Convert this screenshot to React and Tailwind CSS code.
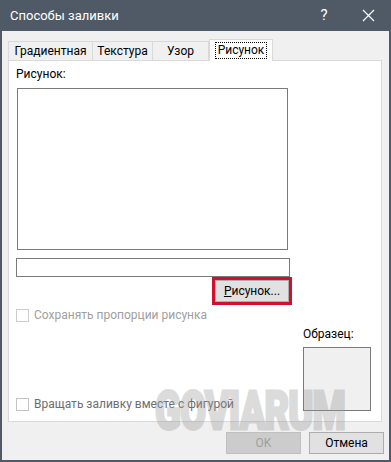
import React from "react";

const Tab = ({ label, active, width }) => {
  if (active) {
    return (
      <div
        className={`${width} h-[22px] -mb-px bg-white border border-b-0 border-[#d9d9d9] flex items-start justify-center pt-[2px] relative z-10`}
      >
        <span className="px-[2px] leading-[15px] border border-dotted border-black">{label}</span>
      </div>
    );
  }
  return (
    <div
      className={`${width} h-[19px] bg-[#f0f0f0] border border-b-0 border-[#d9d9d9] -ml-px first:ml-0 flex items-center justify-center`}
    >
      {label}
    </div>
  );
};

const Checkbox = ({ label, textColor, boxColor }) => (
  <div className="flex items-center gap-[5px] h-[14px]">
    <div className={`w-[13px] h-[13px] bg-white border ${boxColor}`} />
    <span className={textColor}>{label}</span>
  </div>
);

export default function App() {
  return (
    <div className="w-[391px] h-[462px] bg-[#f0f0f0] border-x-2 border-b-2 border-[#505a66] flex flex-col relative overflow-hidden font-['Roboto','Noto_Sans',sans-serif] text-[12px] text-black">
      {/* Title bar */}
      <div className="h-[31px] -mx-[2px] bg-[#505a66] text-white flex items-center pl-[10px] shrink-0">
        <span className="text-[13px] flex-1">Способы заливки</span>
        <span className="text-[15px] w-[20px] text-center">?</span>
        <svg className="ml-[28px] mr-[16px]" width="13" height="13" viewBox="0 0 13 13">
          <path d="M1 1 L12 12 M12 1 L1 12" stroke="white" strokeWidth="1.2" />
        </svg>
      </div>

      {/* Tabs */}
      <div className="flex items-end pl-[6px] mt-[7px] h-[22px] shrink-0">
        <Tab label="Градиентная" width="w-[85px]" />
        <Tab label="Текстура" width="w-[61px]" />
        <Tab label="Узор" width="w-[57px]" />
        <Tab label="Рисунок" width="w-[64px]" active />
      </div>

      {/* Panel */}
      <div className="ml-[6px] mr-[7px] h-[362px] bg-white border border-[#d9d9d9] flex flex-col pl-[7px] shrink-0">
        <div className="mt-[5px] h-[16px] leading-[16px]">Рисунок:</div>
        <div className="mt-[6px] ml-px w-[271px] h-[162px] border border-[#7a7a7a]" />
        <div className="mt-[8px] w-[274px] h-[19px] border border-[#7a7a7a]" />
        <div className="w-[275px] flex justify-end">
          <div className="w-[80px] h-[28px] border-[3px] border-[#d0102c] -mr-px">
            <div className="w-full h-full bg-[#e1e1e1] border border-[#adadad] flex items-center justify-center">
              <span>
                <span className="underline">Р</span>исунок...
              </span>
            </div>
          </div>
        </div>

        <div className="flex flex-1 mt-[3px] mb-[10px]">
          <div className="flex flex-col justify-between w-[287px]">
            <Checkbox
              label="Сохранять пропорции рисунка"
              textColor="text-[#a0a0a0]"
              boxColor="border-[#cccccc]"
            />
            <Checkbox
              label="Вращать заливку вместе с фигурой"
              textColor="text-[#6d6d6d]"
              boxColor="border-[#c4c4c4]"
            />
          </div>
          <div className="flex flex-col justify-end">
            <div className="leading-[16px] mb-[5px]">Образец:</div>
            <div className="w-[68px] h-[64px] bg-[#f0f0f0] border border-[#7a7a7a]" />
          </div>
        </div>
      </div>

      {/* Buttons */}
      <div className="flex justify-end gap-[8px] mt-[10px] mr-[5px]">
        <div className="w-[75px] h-[22px] bg-[#cccccc] border border-[#bfbfbf] text-[#a0a0a0] flex items-center justify-center">
          OK
        </div>
        <div className="w-[75px] h-[22px] bg-[#e1e1e1] border border-[#adadad] flex items-center justify-center">
          Отмена
        </div>
      </div>

      {/* Watermark */}
      <div className="absolute left-[153px] top-[384px] pointer-events-none select-none text-[#999999] opacity-35 font-['Roboto',sans-serif] font-black [-webkit-text-stroke:2px_#999999] text-[38px] tracking-[-1px] scale-y-[1.4] origin-top-left leading-none">
        GOVIARUM
      </div>
    </div>
  );
}
